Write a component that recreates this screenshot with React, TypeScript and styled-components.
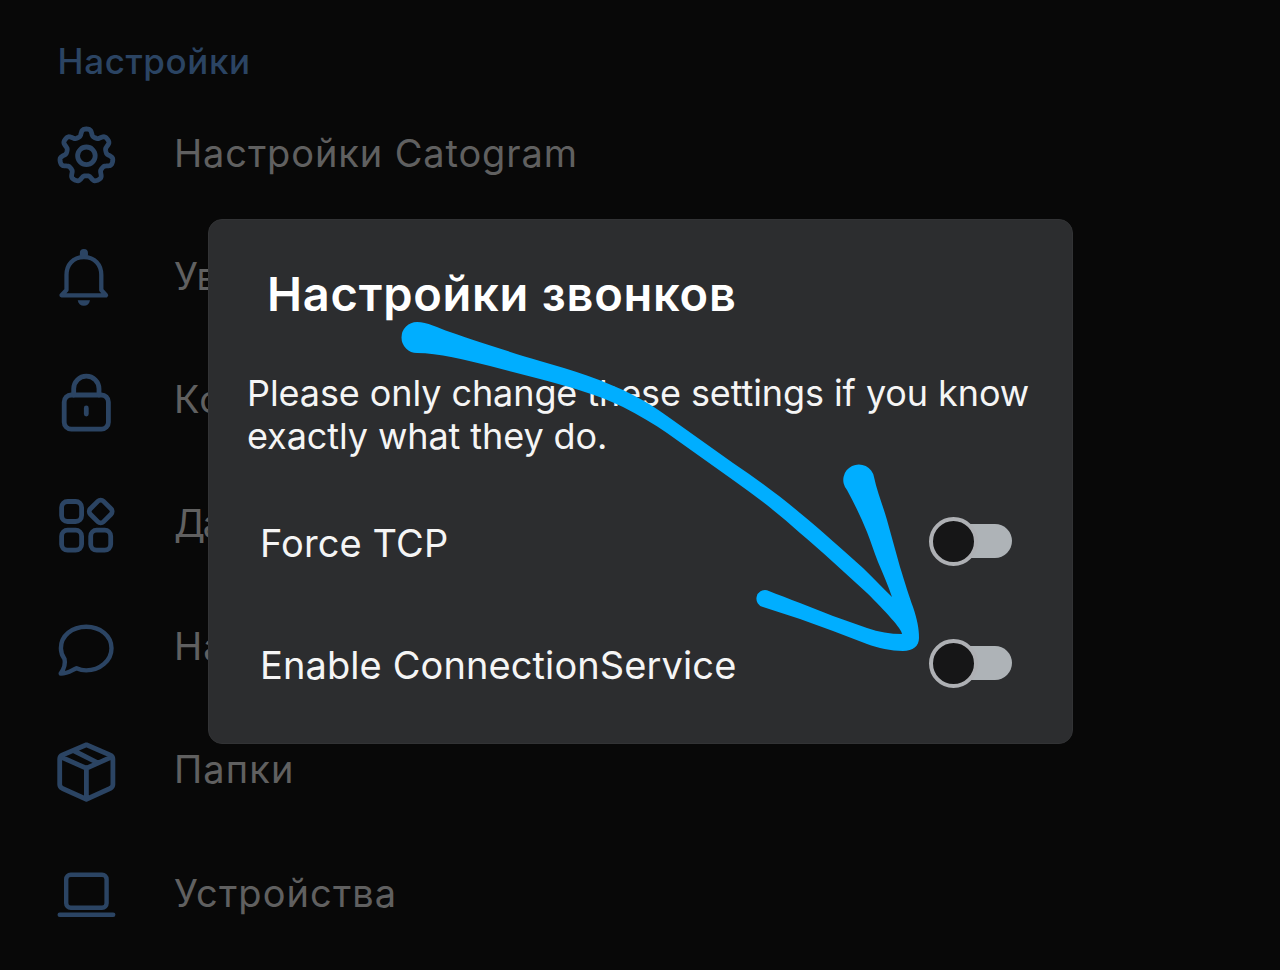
import styled, { createGlobalStyle } from 'styled-components';

const GlobalStyle = createGlobalStyle`
  * {
    box-sizing: border-box;
  }

  body {
    margin: 0;
    background: #080808;
    font-family: 'Inter', 'Liberation Sans', sans-serif;
  }
`;

const Screen = styled.main`
  position: relative;
  width: 1280px;
  height: 970px;
  overflow: hidden;
  background: #080808;
`;

const SectionTitle = styled.h2`
  margin: 0;
  padding: 31px 0 0 57.5px;
  height: 93.7px;
  color: #2b4463;
  font-size: 35px;
  line-height: 60px;
  font-weight: 500;
  letter-spacing: 0.6px;
`;

const MenuItem = styled.div`
  display: flex;
  align-items: center;
  gap: 56px;
  height: 123.3px;
  padding-left: 54px;
`;

const MenuIcon = styled.svg`
  flex: none;
  width: 64px;
  height: 64px;
  fill: none;
  stroke: #2b4463;
  stroke-width: 4.8px;
  stroke-linecap: round;
  stroke-linejoin: round;
`;

const MenuLabel = styled.span<{ $spacing?: number }>`
  padding-bottom: 5px;
  color: #606060;
  font-size: 38px;
  line-height: 50px;
  white-space: nowrap;
  letter-spacing: ${({ $spacing }) => $spacing ?? 1.1}px;
`;

const Dialog = styled.section`
  position: absolute;
  top: 219px;
  left: 208px;
  width: 865px;
  height: 525px;
  padding: 44px 38px 0;
  border: 1px solid #323335;
  border-radius: 14px;
  background: #2c2d2f;
  color: #f5f5f5;
`;

const DialogTitle = styled.h1`
  margin: 0 0 0 20px;
  height: 60px;
  color: #fff;
  font-size: 47px;
  line-height: 60px;
  font-weight: 600;
  letter-spacing: 0.75px;
  white-space: nowrap;
`;

const Description = styled.p`
  margin: 48px 0 0;
  font-size: 36px;
  line-height: 43px;
  letter-spacing: -0.09px;
  white-space: nowrap;
`;

const Options = styled.div`
  margin-top: 22px;
`;

const Option = styled.div`
  display: flex;
  align-items: center;
  justify-content: space-between;
  height: 122px;
  padding: 0 22px 0 13px;
`;

const OptionLabel = styled.span`
  padding-top: 4px;
  font-size: 38px;
  line-height: 50px;
  letter-spacing: 0.1px;
`;

const Track = styled.div`
  display: flex;
  align-items: center;
  width: 75px;
  height: 34px;
  border-radius: 17px;
  background: #aeb3b7;
`;

const Thumb = styled.div`
  flex: none;
  width: 49px;
  height: 49px;
  margin-left: -8px;
  border: 4px solid #aeb0b4;
  border-radius: 50%;
  background: #161617;
`;

const Drawing = styled.svg`
  position: absolute;
  top: 0;
  left: 0;
  width: 1280px;
  height: 970px;
  fill: #00aeff;
  pointer-events: none;
`;

// seven soft teeth around the centre of the icon
const gearPath = () => {
  const points: string[] = [];
  for (let i = 0; i < 210; i++) {
    const a = (i / 210) * Math.PI * 2;
    const r = 23.4 + 3.6 * Math.tanh(1.8 * Math.cos(7 * a));
    points.push(`${(32.4 + r * Math.sin(a)).toFixed(2)} ${(32.8 - r * Math.cos(a)).toFixed(2)}`);
  }
  return `M${points.join('L')}Z`;
};

const items = [
  {
    label: 'Настройки Catogram',
    spacing: 0.88,
    icon: (
      <>
        <path d={gearPath()} />
        <circle cx="32.4" cy="32.8" r="8.8" />
      </>
    ),
  },
  {
    label: 'Ув',
    spacing: 0,
    icon: (
      <>
        <path d="M12.5 43V28C12.5 17.5 19 10.2 29.9 10.2S47.3 17.5 47.3 28V43L52 48.3H7.5Z" strokeWidth="4.3" />
        <path d="M28 6A1.9 1.9 0 0 1 31.8 6V8H28Z" strokeWidth="4.3" />
        <path d="M23.7 53.3H36C35.3 57 33 58.8 29.9 58.8S24.4 57 23.7 53.3Z" fill="#2b4463" stroke="none" />
      </>
    ),
  },
  {
    label: 'Ко',
    icon: (
      <>
        <rect x="10.2" y="25" width="44.2" height="34.2" rx="7" />
        <path d="M19.7 25V18.8A12.65 12.65 0 0 1 45 18.8V25M32.3 38V44" />
      </>
    ),
  },
  {
    label: 'Да',
    spacing: -2.5,
    icon: (
      <>
        <rect x="7.6" y="8.5" width="20" height="20" rx="6" />
        <rect x="7.6" y="37.2" width="20" height="20" rx="6" />
        <rect x="36.7" y="37.2" width="20" height="20" rx="6" />
        <rect x="37.5" y="9.3" width="18.4" height="18.4" rx="3.8" transform="rotate(45 46.7 18.5)" />
      </>
    ),
  },
  {
    label: 'На',
    icon: (
      <path
        d="M10.5 42C8 38.5 6.9 35 6.9 31.2C6.9 18.7 18 9.8 32.2 9.8S57.5 18.8 57.5 31.2S46 53.4 32.2 53.4C28.5 53.4 25.5 52.6 22.5 51.2C17.5 53.3 13.5 56.8 6.7 56.6C9.5 52.5 12 48 10.5 42Z"
        strokeWidth="4.4"
      />
    ),
  },
  {
    label: 'Папки',
    icon: (
      <path d="M32.4 4.8L56 15Q58.9 16.3 58.9 19V44.5Q58.9 47 56 48.5L32.4 59.3L8.5 48.5Q5.7 47 5.7 44.5V19Q5.7 16.3 8.5 15ZM7 17L32.4 28.3L57.5 17M32.4 28.3V59M20.3 11L43.8 22.8" />
    ),
  },
  {
    label: 'Устройства',
    icon: (
      <>
        <rect x="12.2" y="11.8" width="40.4" height="33" rx="4.5" strokeWidth="4.4" />
        <path d="M5.7 51.8H59.2" strokeWidth="4.4" />
      </>
    ),
  },
];

const options = ['Force TCP', 'Enable ConnectionService'];

export default function App() {
  return (
    <>
      <GlobalStyle />
      <Screen>
        <SectionTitle>Настройки</SectionTitle>
        {items.map(({ label, spacing, icon }) => (
          <MenuItem key={label}>
            <MenuIcon viewBox="0 0 64 64">{icon}</MenuIcon>
            <MenuLabel $spacing={spacing}>{label}</MenuLabel>
          </MenuItem>
        ))}

        <Dialog>
          <DialogTitle>Настройки звонков</DialogTitle>
          <Description>
            Please only change these settings if you know <br />
            exactly what they do.
          </Description>
          <Options>
            {options.map((option) => (
              <Option key={option}>
                <OptionLabel>{option}</OptionLabel>
                <Track>
                  <Thumb />
                </Track>
              </Option>
            ))}
          </Options>
        </Dialog>

        <Drawing viewBox="0 0 1280 970">
          <path d="M417 322C427 322 438 328 450 332C476 341 513 353 540 361C572 370 604 380 633 395C645 401 656 408 667 416L733 463C757 479 780 496 800 513C823 532 843 550 863 568C873 578 882 587 892 597C888 585 883 574 878 562C874 552 871 542 867 532C861 517 854 503 847 490A15.5 15.5 0 1 1 874 477C877 491 883 506 887 520L900 567C905 583 909 596 913 607C917 619 919 628 919 638C919 646 913 651 903 651C891 651 878 648 867 644L833 631L800 619L763 607A8.5 8.5 0 0 1 767 590.3C779 595 789 599 800 603L833 616L867 628C879 632 890 634 902 634C902 629 885 611 867 593L833 562C822 552 811 542 800 533C779 514 756 496 733 480L667 433C654 424 639 415 623 407C599 395 567 386 540 379L490 366C466 360 438 353 417 353A15.5 15.5 0 0 1 417 322Z" />
        </Drawing>
      </Screen>
    </>
  );
}
